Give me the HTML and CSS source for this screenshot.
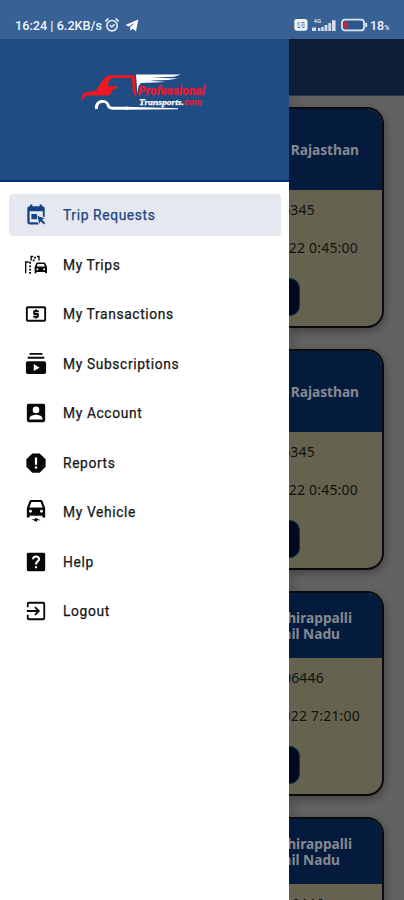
FILE: index.html
```
<!DOCTYPE html>
<html lang="en">
<head>
<meta charset="utf-8">
<meta name="viewport" content="width=device-width">
<title>Professional Transports</title>
<link rel="stylesheet" href="styles.css">
</head>
<body>
<div class="phone">
  <header class="status">
    <span class="status-text">16:24 | 6.2KB/s</span>
    <svg class="alarm" width="16" height="16" viewBox="0 0 16 16" fill="none" stroke="#e8eff7" stroke-width="1.6"><circle cx="8" cy="8.7" r="5.2"/><path d="M1.4 4.3 4.3 1.7M14.6 4.3l-2.9-2.6M5.7 8l2.1 2 2.8-2.6"/></svg>
    <svg class="plane" width="14" height="13" viewBox="0 0 14 13"><path fill="#fff" d="M.5 6 13.3.6 11 12.3 7.4 9.8 5.5 11.7 5 8.2 10.5 3.4 3.8 7.4z"/></svg>
    <span class="spacer"></span>
    <svg width="14" height="14" viewBox="0 0 14 14"><rect x=".3" y="1" width="13.2" height="11.7" rx="2.6" fill="#edf3f8"/><path d="M3 5h3M7.5 4.7h3M3.5 7h2M7 7h4M3.4 9.3h3M8 9.3h2.6" stroke="#567aa6" stroke-width="1.2"/></svg>
    <svg class="signal" width="26" height="16" viewBox="0 0 26 16"><text x="2.5" y="6" class="volte">4G</text><path fill="#d3deea" d="M1 10.500h4V14H1zM7 11h2.400v3H7zM10.300 10h2.500v4h-2.500zM13.600 8h2.800v6h-2.800zM17.300 6h2.800v8h-2.800zM21 3.300h3.600V14H21z"/></svg>
    <svg class="battery" width="27" height="14" viewBox="0 0 27 14"><rect x="1" y="1.6" width="22" height="10.8" rx="3" fill="#2d568c" stroke="#dce5ed" stroke-width="1.8"/><path fill="#d61f34" d="M3.2 3.700h3.400v6.600H3.200z"/><path fill="#dce5ed" d="M24.200 4.800h1a1 1 0 0 1 1 1v2.400a1 1 0 0 1-1 1h-1z"/></svg>
    <span class="charge">18<small>%</small></span>
  </header>

  <div class="screen">
    <aside class="drawer">
      <div class="brand">
        <svg width="126" height="40" viewBox="0 0 126 40">
          <path fill="#ef1722" d="M0 30Q1 21 4 20.500L15 18.500 21.500 8.500Q25 3.300 29 3.300H53.500L55.500 26 51.800 20.500 51 6H33Q29.500 6 28 9L26.500 14H37Q37 16 32 17.500L28.500 23.500H7Q3 24.500 0 30z"/>
          <path fill="none" stroke="#fff" stroke-width="3" d="M15.500 37C14 28 26 27 27.500 34Q28 36.300 33 36.300H47"/>
          <path fill="#fff" d="M45 34.800 97 36.200V37.200L45 37.800zM55 2.500H100L93 4.800 70 5.500 97 6.500 87 8 68 8.600 85 10 60 11 57.500 14 56.500 22z"/>
          <text x="57" y="23" class="logo-main" textLength="67" lengthAdjust="spacingAndGlyphs">Professional</text>
          <text x="58" y="33" class="logo-sub" textLength="63" lengthAdjust="spacingAndGlyphs">Transports.<tspan class="logo-com">com</tspan></text>
        </svg>
      </div>
      <nav class="menu">
        <a class="item active"><svg class="icon" viewBox="0 0 24 24"><path d="M5.500.5H8V2.500h8V.5h2.500V2.500H19a2.500 2.500 0 0 1 2.500 2.500v9.500l-2-1V8H5v12h9l1 2.300H5A2.500 2.500 0 0 1 2.500 20V5A2.500 2.500 0 0 1 5 2.500h.5zM7 11h6v5.500H7zM13.500 13l7.800 2.600-2.700 1.700 3.500 3.500-1.500 1.500-3.500-3.500-1.500 2.700z"/></svg>Trip Requests</a>
        <a class="item"><svg class="icon" viewBox="0 0 24 24"><path d="M22.400 10.300A1.500 1.500 0 0 0 21 9.300h-7.500c-.7 0-1.200.4-1.400 1L10.500 14.500V21h2v-1.500H22V21h2v-6.500zM13.700 11h7l.9 2.500h-8.800zM13.500 17.700a1.100 1.100 0 1 1 0-2.200 1.100 1.100 0 0 1 0 2.200zm7.300 0a1.100 1.100 0 1 1 0-2.200 1.100 1.100 0 0 1 0 2.200zM0 8h4v1.500H1.500V21H0zM4.500 8.500h2v2h-2zM4.500 12.500h2v2h-2zM4.500 16h2v2h-2zM4.500 19.500h2v2h-2zM6 2h3v1.500H7.500V7H6zM10 3h2v2h-2zM13 2h3v5h-1.500V3.500H13zM8.500 6h2v2h-2z"/></svg>My Trips</a>
        <a class="item"><svg class="icon" viewBox="0 0 24 24"><path fill-rule="evenodd" d="M3 3.500h18a2 2 0 0 1 2 2v13a2 2 0 0 1-2 2H3a2 2 0 0 1-2-2v-13a2 2 0 0 1 2-2zm0 2.200v12.600h18V5.700zM11 7h2v1h2v2h-4v1h3a1 1 0 0 1 1 1v3a1 1 0 0 1-1 1h-1v1h-2v-1H9v-2h4v-1h-3a1 1 0 0 1-1-1V9a1 1 0 0 1 1-1h1z"/></svg>My Transactions</a>
        <a class="item"><svg class="icon" viewBox="0 0 24 24"><path fill-rule="evenodd" d="M5 0h14v2H5zM3 4h18v2.200H3zM3 9h18a2 2 0 0 1 2 2v10a2 2 0 0 1-2 2H3a2 2 0 0 1-2-2V11c0-1.100.9-2 2-2zm6.500 3v7.500L16 16z"/></svg>My Subscriptions</a>
        <a class="item"><svg class="icon" viewBox="0 0 24 24"><path fill-rule="evenodd" d="M4 2h16a2 2 0 0 1 2 2v16a2 2 0 0 1-2 2H4a2 2 0 0 1-2-2V4a2 2 0 0 1 2-2zm8 3a3.600 3.600 0 1 0 0 7.200A3.600 3.600 0 0 0 12 5zM5 19h14v-1.500c0-2.300-4.700-3.600-7-3.600s-7 1.300-7 3.600z"/></svg>My Account</a>
        <a class="item"><svg class="icon" viewBox="0 0 24 24"><path fill-rule="evenodd" d="M8 1.500h8L22.500 8v8L16 22.500H8L1.500 16V8zM10.800 6v8h2.400V6zM12 15.500a1.400 1.400 0 1 0 0 2.800 1.400 1.400 0 0 0 0-2.800z"/></svg>Reports</a>
        <a class="item"><svg class="icon" viewBox="0 0 24 24"><path fill-rule="evenodd" d="M6.500-1h11c.8 0 1.400.4 1.700 1.200L22 7.500V18h-3v-2H5v2H2V7.500L4.800.2C5 0 5.500-1 6.500-1zM7 1 4.700 7h14.600L17 1zM6 9.500a1.600 1.600 0 1 0 0 3.200 1.600 1.600 0 0 0 0-3.200zm12 0a1.600 1.600 0 1 0 0 3.200 1.600 1.600 0 0 0 0-3.200zM7 20h4v-1.800l6 2.800h-4v2z"/></svg>My Vehicle</a>
        <a class="item"><svg class="icon" viewBox="0 0 24 24"><path d="M3.500 2h17A1.500 1.500 0 0 1 22 3.500v17a1.500 1.500 0 0 1-1.500 1.500h-17A1.500 1.500 0 0 1 2 20.500v-17A1.500 1.500 0 0 1 3.500 2z"/><path fill="none" stroke="#fff" stroke-width="2.300" d="M8.800 9c0-4 6.500-4 6.500-.4 0 2.800-3.300 2.700-3.300 6M12 16.600v2.200"/></svg>Help</a>
        <a class="item"><svg class="icon" viewBox="0 0 24 24"><path d="M10.100 15.600 11.500 17l5-5-5-5-1.400 1.400 2.600 2.600H2v2h10.700zM20 2H4a2 2 0 0 0-2 2v4h2V4h16v16H4v-4H2v4c0 1.100.9 2 2 2h16a2 2 0 0 0 2-2V4a2 2 0 0 0-2-2z"/></svg>Logout</a>
      </nav>
    </aside>

    <main class="page">
      <div class="appbar"></div>
      <div class="cards">
        <article class="card">
          <h2 class="route">Rajasthan</h2>
          <p class="line phone-a">6345</p><p class="line date-a">2022 0:45:00</p>
          <span class="button"></span>
        </article>
        <article class="card">
          <h2 class="route">Rajasthan</h2>
          <p class="line phone-a">6345</p><p class="line date-a">2022 0:45:00</p>
          <span class="button"></span>
        </article>
        <article class="card short">
          <h2 class="route"><span class="city">Tiruchirappalli</span><span class="state">Tamil Nadu</span></h2>
          <p class="line phone-b">06446</p><p class="line date-b">2022 7:21:00</p>
          <span class="button"></span>
        </article>
        <article class="card short">
          <h2 class="route"><span class="city">Tiruchirappalli</span><span class="state">Tamil Nadu</span></h2>
          <p class="line phone-b">06446</p><p class="line date-b">2022 7:21:00</p>
          <span class="button"></span>
        </article>
      </div>
    </main>
  </div>
</div>
</body>
</html>
```
FILE: styles.css
```
* { box-sizing: border-box; }
body { margin: 0; font-family: Roboto, sans-serif; }
.phone { width: 404px; height: 900px; overflow: hidden; display: flex; flex-direction: column; }

.status { flex: 0 0 39px; display: flex; align-items: center; padding: 11px 14px 0 15px; background: #386296; color: #f0f5fa; }
.status-text { width: 88px; font-size: 12.7px; font-weight: 500; white-space: nowrap; }
.alarm { margin-left: 1px; }
.plane { margin-left: 5px; }
.spacer { flex: 1; }
.signal { margin-left: 3px; }
.volte { font: 700 6px Roboto, sans-serif; fill: #d3deea; }
.battery { margin-left: 4px; }
.charge { margin-left: 2px; width: 20px; font-size: 12.5px; font-weight: 500; white-space: nowrap; }
.charge small { font-size: 7px; }

.screen { flex: 1; min-height: 0; display: flex; }
.drawer { flex: 0 0 289px; background: #fff; }
.brand { height: 143px; padding: 33px 0 0 81px; background: #1f4c83; border-bottom: 2px solid #07297a; }
.brand svg { display: block; }
.logo-main { font: italic 900 13px Roboto, sans-serif; fill: #df1c38; stroke: #df1c38; stroke-width: .3px; }
.logo-sub { font: italic 700 9px "Liberation Serif", serif; fill: #fff; stroke: #fff; stroke-width: .25px; }
.logo-com { font-family: Roboto, sans-serif; fill: #e01d35; stroke: #e01d35; }

.menu { display: flex; flex-direction: column; gap: 7.5px; padding: 12px 8px 0 9px; }
.item { height: 42px; display: flex; align-items: center; gap: 16px; padding-left: 16px; border-radius: 4px; color: #171717; font-size: 13.8px; font-weight: 400; letter-spacing: .63px; -webkit-text-stroke: .25px; }
.icon { width: 22px; height: 22px; flex: none; fill: #080808; overflow: visible; }
.active { background: #e5e8ef; color: #1d4481; }
.active .icon { fill: #164383; }

.page { flex: 1; min-width: 0; overflow: hidden; background: linear-gradient(90deg, #565656, #626262 12px, #626262); font-family: "Noto Sans", sans-serif; }
.appbar { height: 57px; background: #0e1f35; border-bottom: 1px solid #23384f; }
.cards { display: flex; flex-direction: column; gap: 21px; padding-top: 11px; }
.card { width: 95px; height: 221px; overflow: hidden; display: flex; flex-direction: column; align-items: flex-end; background: #656350; border: 2px solid #080a0d; border-left: 0; border-radius: 0 17px 17px 0; box-shadow: 1px 3px 9px #0005; }
.card.short { height: 205px; }
.route { flex: none; width: 100%; height: 81px; margin: 0; padding-right: 23px; display: flex; flex-direction: column; align-items: flex-end; justify-content: center; background: #051b3e; color: #858990; font-size: 13.7px; line-height: 16px; font-weight: 700; white-space: nowrap; }
.short .route { height: 65px; }
.city { margin-right: 7px; }
.state { margin-right: 19px; }
.line { margin: 0; font-size: 14px; line-height: 20px; letter-spacing: .2px; color: #11120f; white-space: nowrap; }
.phone-a { margin: 10px 67px 18px 0; }
.date-a { margin-right: 24px; }
.phone-b { margin: 10px 58px 18px 0; }
.date-b { margin-right: 22px; }
.button { flex: none; width: 40px; height: 38px; margin: 20px 82px 0 0; background: #020b1d; border: 1px solid #083c46; border-radius: 10px; }
```
